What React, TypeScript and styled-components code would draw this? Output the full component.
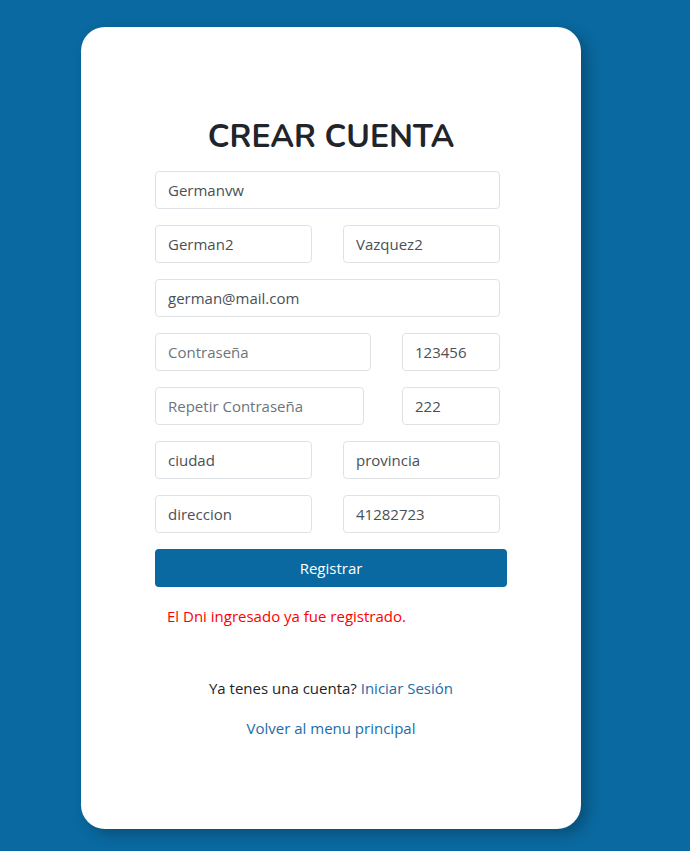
import React from 'react';
import styled, { createGlobalStyle } from 'styled-components';

const GlobalStyle = createGlobalStyle`
  html, body {
    margin: 0;
    padding: 0;
    background: #0a69a0;
  }
  body {
    font-family: 'Open Sans', 'Noto Sans', sans-serif;
    color: #212529;
  }
`;

const Page = styled.div`
  min-height: 851px;
  padding: 27px 0 0 81px;
  box-sizing: border-box;
`;

const Card = styled.div`
  width: 500px;
  height: 802px;
  box-sizing: border-box;
  background: #fff;
  border-radius: 24px;
  box-shadow: 6px 5px 14px rgba(0, 0, 0, 0.25);
  padding: 89px 74px 0;
`;

const Title = styled.h1`
  margin: 0 0 14px;
  font-family: 'Nunito', 'Open Sans', sans-serif;
  font-size: 32px;
  font-weight: 700;
  line-height: 41px;
  text-align: center;
  color: #212529;
`;

const Form = styled.form`
  display: flex;
  flex-direction: column;
  gap: 16px;
`;

const Row = styled.div`
  display: flex;
  justify-content: space-between;
  width: 345px;
`;

const Input = styled.input<{ $w?: number }>`
  width: ${p => (p.$w ? `${p.$w}px` : '100%')};
  height: 38px;
  box-sizing: border-box;
  padding: 0 12px;
  border: 1px solid #dee2e6;
  border-radius: 4px;
  font-family: inherit;
  font-size: 15px;
  color: #495057;
  outline: none;
  &::placeholder {
    color: #6c757d;
  }
`;

const Submit = styled.button`
  width: 352px;
  height: 38px;
  border: none;
  border-radius: 4px;
  background: #0a69a0;
  color: #fff;
  font-family: inherit;
  font-size: 15px;
  cursor: pointer;
`;

const Error = styled.p`
  margin: 17px 0 0 12px;
  color: #ff0000;
  font-size: 15px;
  line-height: 24px;
`;

const Footer = styled.div`
  margin-top: 48px;
  display: flex;
  flex-direction: column;
  align-items: center;
  gap: 16px;
  font-size: 15px;
  line-height: 24px;
  width: 352px;
`;

const Link = styled.a`
  color: #1c6ca8;
  text-decoration: none;
`;

const App = () => (
  <>
    <GlobalStyle />
    <Page>
      <Card>
        <Title>CREAR CUENTA</Title>
        <Form onSubmit={e => e.preventDefault()}>
          <Row>
            <Input defaultValue="Germanvw" />
          </Row>
          <Row>
            <Input $w={157} defaultValue="German2" />
            <Input $w={157} defaultValue="Vazquez2" />
          </Row>
          <Row>
            <Input defaultValue="german@mail.com" />
          </Row>
          <Row>
            <Input $w={216} placeholder="Contraseña" />
            <Input $w={98} defaultValue="123456" />
          </Row>
          <Row>
            <Input $w={209} placeholder="Repetir Contraseña" />
            <Input $w={98} defaultValue="222" />
          </Row>
          <Row>
            <Input $w={157} defaultValue="ciudad" />
            <Input $w={157} defaultValue="provincia" />
          </Row>
          <Row>
            <Input $w={157} defaultValue="direccion" />
            <Input $w={157} defaultValue="41282723" />
          </Row>
          <Submit type="submit">Registrar</Submit>
        </Form>
        <Error>El Dni ingresado ya fue registrado.</Error>
        <Footer>
          <span>
            Ya tenes una cuenta? <Link href="#">Iniciar Sesión</Link>
          </span>
          <Link href="#">Volver al menu principal</Link>
        </Footer>
      </Card>
    </Page>
  </>
);

export default App;
